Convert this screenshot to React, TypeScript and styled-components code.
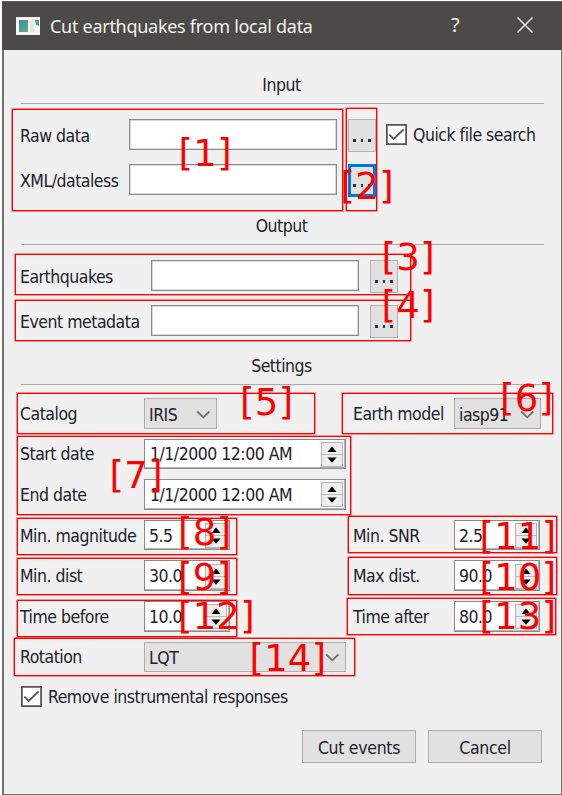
import React from "react";
import styled, { createGlobalStyle } from "styled-components";

const Global = createGlobalStyle`
  * { box-sizing: border-box; }
  html, body { margin: 0; background: #fff; }
  body { overflow: hidden; }
`;

const Screen = styled.main`
  position: relative;
  width: 562px;
  height: 795px;
  padding: 1px 0 0 2px;
  overflow: hidden;
  font: 17.5px/24px "DejaVu Sans Condensed", "DejaVu Sans", sans-serif;
  font-stretch: condensed;
  letter-spacing: -0.49px;
  color: #20202a;
`;

const Dialog = styled.section`
  width: 560px;
  height: 794px;
  border: 1.5px solid #70706e;
  border-left-width: 2px;
  border-top: 0;
  background: #f0f0f0;
`;

const TitleBar = styled.header`
  display: flex;
  align-items: center;
  height: 49px;
  margin: 0 -1px 0 -2px;
  padding: 0 2px 0 14px;
  background: #4b4a47;
  border-top: 1px solid #5b5b59;
  color: #f1f1ef;
`;

const Title = styled.h1`
  flex: 1;
  margin: 0 0 0 10px;
  font: 400 18px/24px "Noto Sans", "Open Sans", sans-serif;
  letter-spacing: -0.28px;
`;

const TitleButton = styled.span`
  display: flex;
  justify-content: center;
  width: 70px;
  font: 20px/24px "Noto Sans", sans-serif;
  padding-bottom: 2px;
`;

const Content = styled.div`
  display: flex;
  flex-direction: column;
  padding: 0 17px 0 17px;
`;

const SectionHead = styled.h2<{ $height: number }>`
  display: flex;
  flex-direction: column;
  justify-content: flex-end;
  height: ${(p) => p.$height}px;
  margin: 0;
  padding: 0 2px 6px 0;
  border-bottom: 1.5px solid #a9a9a9;
  font: inherit;
  text-align: center;
`;

const FieldRows = styled.div<{ $label: number }>`
  display: grid;
  grid-template-columns: ${(p) => p.$label}px 208px 11px 28px 1fr;
  grid-auto-rows: 33px;
  row-gap: 12px;
  padding-top: 15px;
`;

const Label = styled.label`
  align-self: center;
  margin-left: -1px;
  padding-top: 1px;
  white-space: nowrap;
`;

const TextBox = styled.div`
  height: 31px;
  background: #fff;
  border: 1.5px solid #8c8c8c;
  box-shadow: inset 0 0 0 0.5px #b5b5b5;
`;

const Browse = styled.button<{ $active?: boolean }>`
  grid-column: 4;
  width: 28px;
  height: 33px;
  padding: 0;
  border: ${(p) => (p.$active ? "3px solid #0078d7" : "1.5px solid #b4b4b4")};
  background: #e1e1e1;
  display: flex;
  align-items: flex-end;
  justify-content: center;
  gap: 5px;
  padding-bottom: ${(p) => (p.$active ? 7 : 9)}px;
  & > i { width: 2.5px; height: 3px; background: #2d2b3b; flex: none; }
`;

const CheckLabel = styled.label`
  display: flex;
  align-items: center;
  gap: 6px;
  white-space: nowrap;
  & > span { padding-top: 1px; }
`;

const QuickSearch = styled(CheckLabel)`
  margin-left: 10px;
  height: 31px;
`;

const Settings = styled.div`
  display: grid;
  grid-template-columns: 123px 210px 100px 88px;
  grid-auto-rows: 30.6px;
  row-gap: 10px;
  padding-top: 13px;
`;

const Combo = styled.div<{ $width: number }>`
  display: flex;
  align-items: center;
  justify-content: space-between;
  width: ${(p) => p.$width}px;
  padding: 3px 5px 0 4px;
  border: 1.5px solid #adadad;
  background: #e1e1e1;
`;

const SpinBox = styled.div<{ $width: number; $indent?: number }>`
  display: flex;
  align-items: center;
  justify-content: space-between;
  width: ${(p) => p.$width}px;
  padding: 1px 2px 0 ${(p) => p.$indent ?? 4}px;
  border: 1.5px solid #8a8a8a;
  box-shadow: inset -1px -1px 0 #b5b5b5;
  background: #fff;
  white-space: nowrap;
`;

const Steps = styled.span`
  display: flex;
  flex-direction: column;
  width: 22px;
  height: 25px;
  border: 1px solid #b2b2b2;
  background: #eee;
  & > svg { display: block; flex: 1; }
  & > svg + svg { border-top: 1px solid #bbb; }
`;

const RemoveResponse = styled(CheckLabel)`
  height: 24px;
  margin-top: 12px;
`;

const Actions = styled.footer`
  display: flex;
  justify-content: flex-end;
  gap: 12px;
  margin-top: 22px;
  padding-right: 2px;
`;

const Action = styled.button`
  width: 114px;
  height: 33px;
  padding: 2px 0 0;
  border: 1.5px solid #adadad;
  background: #e1e1e1;
  color: inherit;
  font: inherit;
  letter-spacing: -0.3px;
`;

const Outline = styled.div<{ $x: number; $y: number; $w: number; $h: number }>`
  position: absolute;
  left: ${(p) => p.$x}px;
  top: ${(p) => p.$y}px;
  width: ${(p) => p.$w}px;
  height: ${(p) => p.$h}px;
  border: 1px solid #ff0000;
  box-shadow: 0 0 0 0.4px #ff0000;
`;

const Mark = styled.span<{ $x: number; $y: number }>`
  position: absolute;
  left: ${(p) => p.$x - 2.5}px;
  top: ${(p) => p.$y - 2.5}px;
  color: #ff0000;
  font: 37px/37px "DejaVu Sans", sans-serif;
  font-stretch: normal;
  letter-spacing: 0;
  white-space: nowrap;
  & > b { font-weight: 400; margin: 0 0.4px; }
`;

const Tick = () => (
  <svg width="21" height="21" viewBox="0 0 21 21" fill="none">
    <rect x="0.9" y="0.9" width="19.2" height="19.2" fill="#fff" stroke="#444" strokeWidth="1.6" />
    <path d="M3.3 10.6 7.7 15 17.6 5.4" stroke="#555" strokeWidth="1.8" />
  </svg>
);

const Chevron = () => (
  <svg width="15" height="10" viewBox="0 0 15 10" fill="none">
    <path d="M1.2 1.5 7.3 7.3 13.4 1.5" stroke="#707070" strokeWidth="1.8" />
  </svg>
);

const Stepper = () => (
  <Steps>
    <svg viewBox="0 0 20 11"><path d="M5.5 9 10 3.6 14.5 9Z" fill="#000" /></svg>
    <svg viewBox="0 0 20 11"><path d="M5.5 2.4 10 7.8 14.5 2.4Z" fill="#000" /></svg>
  </Steps>
);

const Dots = () => (<><i /><i /><i /></>);

const outlines = [
  [12, 109, 331, 102], [346, 108, 31, 103], [15, 254, 396, 41], [15, 300, 396, 41],
  [17, 393, 298, 41], [342, 393, 211, 41], [17, 436, 334, 79], [17, 518, 220, 37],
  [17, 558, 220, 37], [348, 557, 209, 38], [348, 516, 209, 37], [17, 600, 220, 37],
  [347, 598, 209, 37], [14, 638, 341, 38],
];

const marks = [
  [181, 137.5], [343, 170], [384, 241.5], [384, 289.5], [242.5, 386.5], [502.5, 382], [112, 459],
  [180.5, 516], [180.5, 561], [482, 561], [482, 520], [180.5, 600], [482, 600], [252, 642],
];

export default function App() {
  return (
    <>
      <Global />
      <Screen>
        <Dialog>
          <TitleBar>
            <svg width="24" height="18" viewBox="0 0 24 18">
              <defs>
                <linearGradient id="view" x1="0" y1="0" x2="1" y2="1">
                  <stop offset="0" stopColor="#4389b4" />
                  <stop offset="1" stopColor="#61ad70" />
                </linearGradient>
              </defs>
              <rect width="24" height="18" fill="#f4f5f4" />
              <rect x="3" y="3" width="9" height="12" fill="url(#view)" />
              <rect x="14" y="3" width="4" height="12" fill="#e4e6e4" />
              <path d="M19 3h4v6l-3-1Z" fill="url(#view)" />
            </svg>
            <Title>Cut earthquakes from local data</Title>
            <TitleButton>?</TitleButton>
            <TitleButton>
              <svg width="18" height="18" viewBox="0 0 18 18">
                <path d="M1.5 1.5 16.5 16.5M16.5 1.5 1.5 16.5" stroke="#eee" strokeWidth="1.5" />
              </svg>
            </TitleButton>
          </TitleBar>
          <Content>
            <SectionHead $height={54}>Input</SectionHead>
            <FieldRows $label={108}>
              <Label>Raw data</Label>
              <TextBox />
              <Browse><Dots /></Browse>
              <QuickSearch><Tick /><span>Quick file search</span></QuickSearch>
              <Label>XML/dataless</Label>
              <TextBox />
              <Browse $active><Dots /></Browse>
            </FieldRows>
            <SectionHead $height={47.5}>Output</SectionHead>
            <FieldRows $label={130}>
              <Label>Earthquakes</Label>
              <TextBox />
              <Browse><Dots /></Browse>
              <span />
              <Label>Event metadata</Label>
              <TextBox />
              <Browse><Dots /></Browse>
            </FieldRows>
            <SectionHead $height={47.5}>Settings</SectionHead>
            <Settings>
              <Label>Catalog</Label>
              <Combo $width={73}>IRIS<Chevron /></Combo>
              <Label>Earth model</Label>
              <Combo $width={87}>iasp91<Chevron /></Combo>
              <Label>Start date</Label>
              <SpinBox $width={202} $indent={5}>1/1/2000 12:00 AM<Stepper /></SpinBox>
              <span /><span />
              <Label>End date</Label>
              <SpinBox $width={202} $indent={5}>1/1/2000 12:00 AM<Stepper /></SpinBox>
              <span /><span />
              <Label>Min. magnitude</Label>
              <SpinBox $width={86}>5.5<Stepper /></SpinBox>
              <Label>Min. SNR</Label>
              <SpinBox $width={86}>2.5<Stepper /></SpinBox>
              <Label>Min. dist</Label>
              <SpinBox $width={86}>30.0<Stepper /></SpinBox>
              <Label>Max dist.</Label>
              <SpinBox $width={86}>90.0<Stepper /></SpinBox>
              <Label>Time before</Label>
              <SpinBox $width={86}>10.0<Stepper /></SpinBox>
              <Label>Time after</Label>
              <SpinBox $width={86}>80.0<Stepper /></SpinBox>
              <Label>Rotation</Label>
              <Combo $width={202}>LQT<Chevron /></Combo>
            </Settings>
            <RemoveResponse><Tick /><span>Remove instrumental responses</span></RemoveResponse>
            <Actions>
              <Action>Cut events</Action>
              <Action>Cancel</Action>
            </Actions>
          </Content>
        </Dialog>
        {outlines.map(([x, y, w, h], i) => (
          <Outline key={i} $x={x} $y={y} $w={w} $h={h} />
        ))}
        {marks.map(([x, y], i) => (
          <Mark key={i} $x={x} $y={y}>[<b>{i + 1}</b>]</Mark>
        ))}
      </Screen>
    </>
  );
}
